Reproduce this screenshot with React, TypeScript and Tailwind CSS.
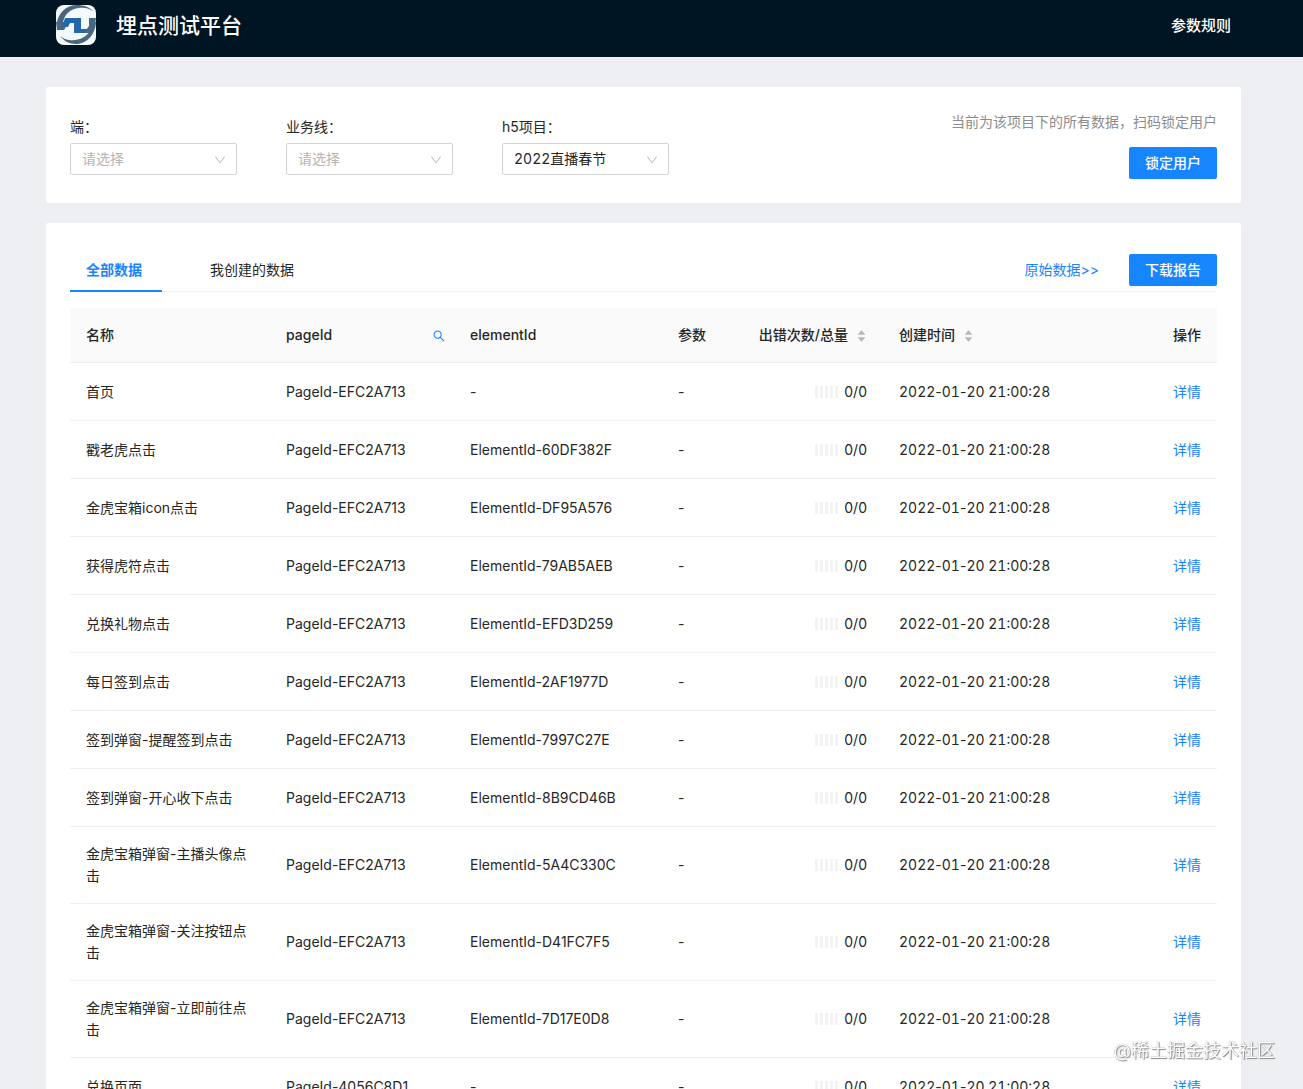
import { Fragment, useState } from "react"
import { AiFillCaretDown, AiFillCaretUp, AiOutlineDown, AiOutlineSearch } from "react-icons/ai"

type Row = {
  name: string
  pageId: string
  elementId: string
}

const rows: Row[] = [
  { name: "首页", pageId: "PageId-EFC2A713", elementId: "-" },
  { name: "戳老虎点击", pageId: "PageId-EFC2A713", elementId: "ElementId-60DF382F" },
  { name: "金虎宝箱icon点击", pageId: "PageId-EFC2A713", elementId: "ElementId-DF95A576" },
  { name: "获得虎符点击", pageId: "PageId-EFC2A713", elementId: "ElementId-79AB5AEB" },
  { name: "兑换礼物点击", pageId: "PageId-EFC2A713", elementId: "ElementId-EFD3D259" },
  { name: "每日签到点击", pageId: "PageId-EFC2A713", elementId: "ElementId-2AF1977D" },
  { name: "签到弹窗-提醒签到点击", pageId: "PageId-EFC2A713", elementId: "ElementId-7997C27E" },
  { name: "签到弹窗-开心收下点击", pageId: "PageId-EFC2A713", elementId: "ElementId-8B9CD46B" },
  { name: "金虎宝箱弹窗-主播头像点击", pageId: "PageId-EFC2A713", elementId: "ElementId-5A4C330C" },
  { name: "金虎宝箱弹窗-关注按钮点击", pageId: "PageId-EFC2A713", elementId: "ElementId-D41FC7F5" },
  { name: "金虎宝箱弹窗-立即前往点击", pageId: "PageId-EFC2A713", elementId: "ElementId-7D17E0D8" },
  { name: "兑换页面", pageId: "PageId-4056C8D1", elementId: "-" },
]

function Logo() {
  return (
    <svg viewBox="0 0 40 40" className="size-10 rounded-lg" aria-hidden="true">
      <rect width="40" height="40" fill="#f4f9fc" />
      <path d="M1 17C3 7 11 0 21 0c7 0 12 2 16 6-5-3-9-4-14-3C14 4 9 9 7 17Z" fill="#49677f" />
      <path d="M40 16c0 13-9 23-20 23-7 0-12-3-16-8 5 4 10 5 15 4 8-1 14-5 16-12Z" fill="#49677f" />
      <path d="M0 17h9v-4h6l-4 7-3 5H1Z" fill="#49677f" />
      <path d="M9 13h16v11h10l-3 4H18V18h-4l-2 4H6Z" fill="#2468a8" />
      <path d="M33 13h7c-1 7-3 11-6 15h-6l5-7Z" fill="#49677f" />
    </svg>
  )
}

function FilterSelect({ id, label, options, value }: { id: string; label: string; options: string[]; value?: string }) {
  const [current, setCurrent] = useState(value ?? "")

  return (
    <div className="w-[167px]">
      <label htmlFor={id} className="block leading-8">
        {label}
      </label>
      <div className="relative">
        <select
          id={id}
          value={current}
          onChange={(e) => setCurrent(e.target.value)}
          className={
            current
              ? "block h-8 w-full appearance-none rounded-xs border border-[#d4d4d4] bg-white pr-8 pl-[11px] text-[#262626] tabular-nums"
              : "block h-8 w-full appearance-none rounded-xs border border-[#d4d4d4] bg-white pr-8 pl-[11px] text-[#b5b5b5]"
          }
        >
          <option value="">请选择</option>
          {options.map((option) => (
            <option key={option} value={option}>
              {option}
            </option>
          ))}
        </select>
        <AiOutlineDown className="pointer-events-none absolute top-[10px] right-[10px] size-[14px] text-[#c4c4c4]" />
      </div>
    </div>
  )
}

function Sorter({ label }: { label: string }) {
  return (
    <button type="button" className="inline-flex items-center gap-2 align-top font-medium">
      <span>{label}</span>
      <span className="mt-[2px] flex flex-col items-center text-[#b9b9b9]">
        <AiFillCaretUp className="size-[11px]" />
        <AiFillCaretDown className="-mt-1 size-[11px]" />
      </span>
    </button>
  )
}

function Steps() {
  return (
    <span className="flex gap-[2px]">
      {[0, 1, 2, 3, 4].map((step) => (
        <span key={step} className="h-3 w-[3px] bg-[#f3f3f3]" />
      ))}
    </span>
  )
}

// Digits share one width, the hyphens keep their own narrow one.
function Timestamp({ value }: { value: string }) {
  return (
    <time className="tabular-nums">
      {value.split("-").map((part, i) => (
        <Fragment key={i}>
          {i > 0 && <span className="proportional-nums">-</span>}
          {part}
        </Fragment>
      ))}
    </time>
  )
}

export default function App() {
  const [tab, setTab] = useState("all")

  return (
    <div className="flex h-screen flex-col overflow-hidden bg-[#edeff3] font-['Inter','Noto_Sans_CJK_SC',sans-serif] text-sm leading-[22px] text-[#262626]">
      <header className="flex h-[57px] shrink-0 items-start justify-between bg-[#001523] pt-[5px] pr-[72px] pl-14 text-white">
        <div className="flex items-start gap-5">
          <Logo />
          <h1 className="text-[21px] leading-[42px] font-medium">埋点测试平台</h1>
        </div>
        <a href="#rules" className="text-[15px] leading-[42px] font-medium">
          参数规则
        </a>
      </header>

      <main className="min-h-0 flex-1 overflow-y-auto pt-[30px] pr-[62px] pl-[46px] [scrollbar-width:none]">
        <section className="flex items-start justify-between rounded-xs bg-white p-6">
          <div className="flex gap-[49px]">
            <FilterSelect id="terminal" label="端：" options={["iOS", "Android"]} />
            <FilterSelect id="business" label="业务线：" options={["直播"]} />
            <FilterSelect id="project" label="h5项目：" options={["2022直播春节"]} value="2022直播春节" />
          </div>
          <div className="flex flex-col items-end gap-[14px]">
            <p className="text-[#8c8c8c]">当前为该项目下的所有数据，扫码锁定用户</p>
            <button type="button" className="h-8 rounded-xs bg-[#1785ff] px-4 font-medium text-white">
              锁定用户
            </button>
          </div>
        </section>

        <section className="mt-5 rounded-xs bg-white p-6">
          <div className="flex h-[45px] items-stretch justify-between border-b border-[#f0f0f0]">
            <div role="tablist" className="flex gap-8">
              <button
                type="button"
                role="tab"
                aria-selected={tab === "all"}
                onClick={() => setTab("all")}
                className="-mb-px border-b-2 border-transparent pt-[2px] pr-5 pl-4 aria-selected:border-[#1785ff] aria-selected:font-bold aria-selected:text-[#1785ff]"
              >
                全部数据
              </button>
              <button
                type="button"
                role="tab"
                aria-selected={tab === "mine"}
                onClick={() => setTab("mine")}
                className="-mb-px border-b-2 border-transparent pt-[2px] pr-5 pl-4 aria-selected:border-[#1785ff] aria-selected:font-bold aria-selected:text-[#1785ff]"
              >
                我创建的数据
              </button>
            </div>
            <div className="flex items-center gap-[30px] pt-[2px]">
              <a href="#raw" className="text-[#1785ff]">
                原始数据&gt;&gt;
              </a>
              <button type="button" className="h-8 rounded-xs bg-[#1785ff] px-4 font-medium text-white">
                下载报告
              </button>
            </div>
          </div>

          <table className="mt-4 w-full table-fixed border-separate border-spacing-0 text-left">
            <colgroup>
              <col className="w-[200px]" />
              <col className="w-[184px]" />
              <col className="w-[208px]" />
              <col className="w-20" />
              <col className="w-[141px]" />
              <col />
              <col className="w-[60px]" />
            </colgroup>
            <thead className="bg-[#fafafa]">
              <tr className="*:border-b *:border-[#f0f0f0] *:px-4 *:py-4 *:font-medium">
                <th>名称</th>
                <th>
                  <div className="flex items-center justify-between">
                    pageId
                    <button type="button" aria-label="搜索 pageId" className="-mr-2 pt-[2px] text-[#1785ff]">
                      <AiOutlineSearch className="size-[14px]" />
                    </button>
                  </div>
                </th>
                <th>elementId</th>
                <th>参数</th>
                <th className="text-right whitespace-nowrap">
                  <Sorter label="出错次数/总量" />
                </th>
                <th>
                  <Sorter label="创建时间" />
                </th>
                <th>操作</th>
              </tr>
            </thead>
            <tbody>
              {rows.map((row) => (
                <tr key={row.name} className="h-[58px] *:border-b *:border-[#f0f0f0] *:px-4 *:py-4">
                  <td>{row.name}</td>
                  <td>{row.pageId}</td>
                  <td>{row.elementId}</td>
                  <td>-</td>
                  <td>
                    <div className="flex items-center justify-end gap-[6px]">
                      <Steps />
                      0/0
                    </div>
                  </td>
                  <td>
                    <Timestamp value="2022-01-20 21:00:28" />
                  </td>
                  <td>
                    <a href="#detail" className="text-[#1785ff]">
                      详情
                    </a>
                  </td>
                </tr>
              ))}
            </tbody>
          </table>
        </section>
      </main>

      <div className="pointer-events-none fixed right-7 bottom-6 text-lg leading-7 text-white [text-shadow:1px_1px_1px_#888,0_0_1px_#888]">
        @稀土掘金技术社区
      </div>
    </div>
  )
}
